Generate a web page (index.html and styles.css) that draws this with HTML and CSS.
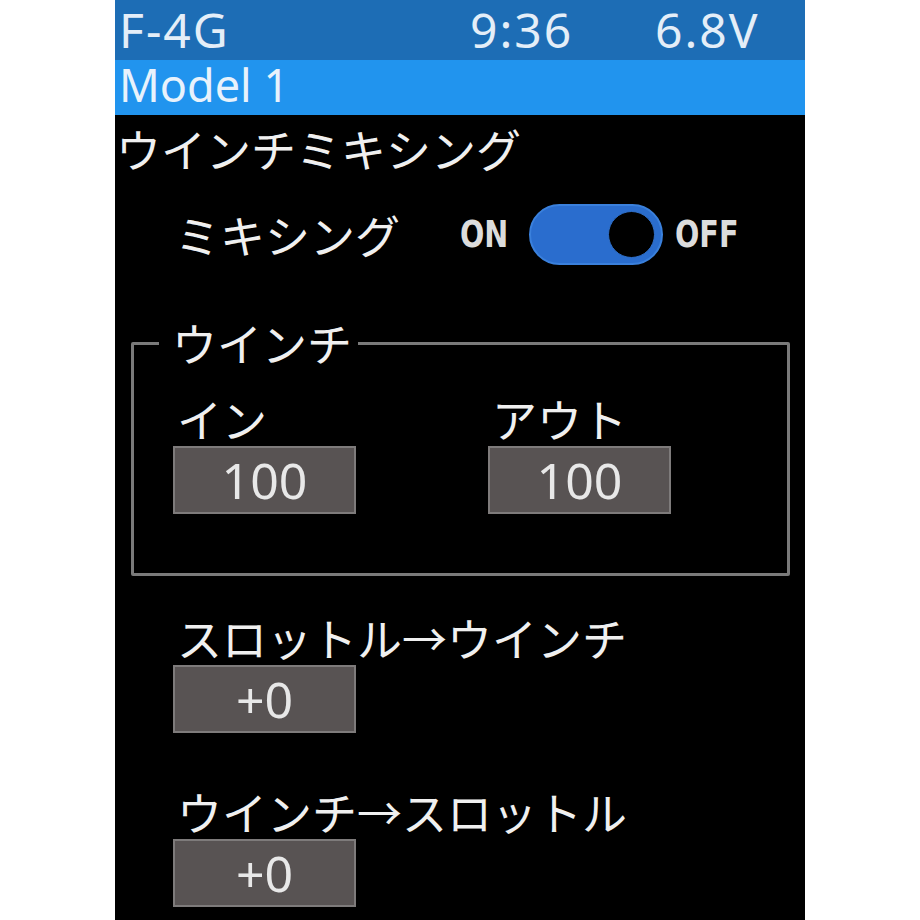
FILE: index.html
```html
<!DOCTYPE html>
<html lang="ja">
<head>
<meta charset="utf-8">
<title>ウインチミキシング</title>
<link rel="stylesheet" href="styles.css">
</head>
<body>
<div class="screen">
  <div class="statusbar">
    <span class="st-name">F-4G</span>
    <span class="st-time">9:36</span>
    <span class="st-volt">6.8V</span>
  </div>
  <div class="modelbar">Model 1</div>
  <div class="title">ウインチミキシング</div>
  <div class="mixrow">
    <span class="mixlabel">ミキシング</span>
    <span class="sw-text sw-on">ON</span>
    <span class="toggle"><span class="knob"></span></span>
    <span class="sw-text sw-off">OFF</span>
  </div>
  <fieldset class="group">
    <legend class="group-title">ウインチ</legend>
    <div class="group-cols">
      <div class="field">
        <div class="label">イン</div>
        <div class="valbox">100</div>
      </div>
      <div class="field">
        <div class="label">アウト</div>
        <div class="valbox">100</div>
      </div>
    </div>
  </fieldset>
  <div class="field solo first">
    <div class="label">スロットル→ウインチ</div>
    <div class="valbox">+0</div>
  </div>
  <div class="field solo second">
    <div class="label">ウインチ→スロットル</div>
    <div class="valbox">+0</div>
  </div>
</div>
</body>
</html>
```

FILE: styles.css
```css
html, body {
  margin: 0;
  padding: 0;
  background: #ffffff;
}
.screen {
  width: 690px;
  height: 920px;
  margin-left: 115px;
  background: #000000;
  overflow: hidden;
  display: flex;
  flex-direction: column;
  font-family: "Noto Sans CJK JP", "Noto Sans", sans-serif;
  color: #f0f0f0;
}
.statusbar {
  height: 60px;
  background: #1d6db5;
  color: #e4eef8;
  font-family: "Noto Sans", sans-serif;
  font-size: 48px;
  letter-spacing: 2px;
  line-height: 56px;
  display: grid;
  grid-template-columns: 351px 185px 1fr;
  align-items: center;
  padding-left: 4px;
}
.modelbar {
  height: 55px;
  background: #2194ee;
  color: #e8f2fc;
  font-family: "Noto Sans", sans-serif;
  font-size: 45px;
  line-height: 50px;
  padding-left: 4px;
}
.title {
  height: 70px;
  line-height: 68px;
  font-size: 45px;
  padding-left: 1px;
}
.mixrow {
  margin-top: 19px;
  height: 61px;
  display: flex;
  align-items: center;
  padding-left: 60px;
}
.mixlabel {
  font-size: 45px;
  line-height: 61px;
  width: 285px;
}
.sw-text {
  display: inline-block;
  font-family: "Liberation Sans Narrow", "DejaVu Sans Condensed", sans-serif;
  font-weight: bold;
  font-size: 37px;
  color: #dcdcdc;
  transform: scaleX(0.86);
  transform-origin: left center;
}
.sw-on {
  width: 69px;
}
.toggle {
  box-sizing: border-box;
  width: 134px;
  height: 61px;
  border-radius: 31px;
  background: #2a6dce;
  border: 2px solid #3a80dc;
  display: flex;
  align-items: center;
  justify-content: flex-end;
  padding-right: 6px;
}
.knob {
  box-sizing: border-box;
  width: 47px;
  height: 47px;
  border-radius: 50%;
  background: #000;
  border: 1px solid #2f6fc8;
}
.sw-off {
  margin-left: 12px;
}
.group {
  margin: 57px 15px 0 16px;
  padding: 0 0 59px 0;
  border: 3px solid #7a7a7a;
  border-radius: 2px;
  min-width: 0;
}
.group-title {
  margin-left: 25px;
  padding: 0 6px 0 13px;
  font-size: 45px;
  line-height: 42px;
}
.group-cols {
  display: flex;
  padding-left: 39px;
  margin-top: 33px;
}
.field {
  display: flex;
  flex-direction: column;
  flex: none;
  width: 315px;
}
.label {
  font-size: 45px;
  line-height: 44px;
  padding-left: 4px;
  white-space: nowrap;
}
.valbox {
  box-sizing: border-box;
  width: 183px;
  height: 68px;
  margin-top: 5px;
  background: #585353;
  border: 2px solid #7e7b7b;
  color: #e8e8e8;
  font-family: "Noto Sans", sans-serif;
  font-size: 50px;
  line-height: 64px;
  text-align: center;
}
.solo {
  padding-left: 58px;
  width: auto;
}
.solo.first {
  margin-top: 40px;
}
.solo.second {
  margin-top: 57px;
}
```
